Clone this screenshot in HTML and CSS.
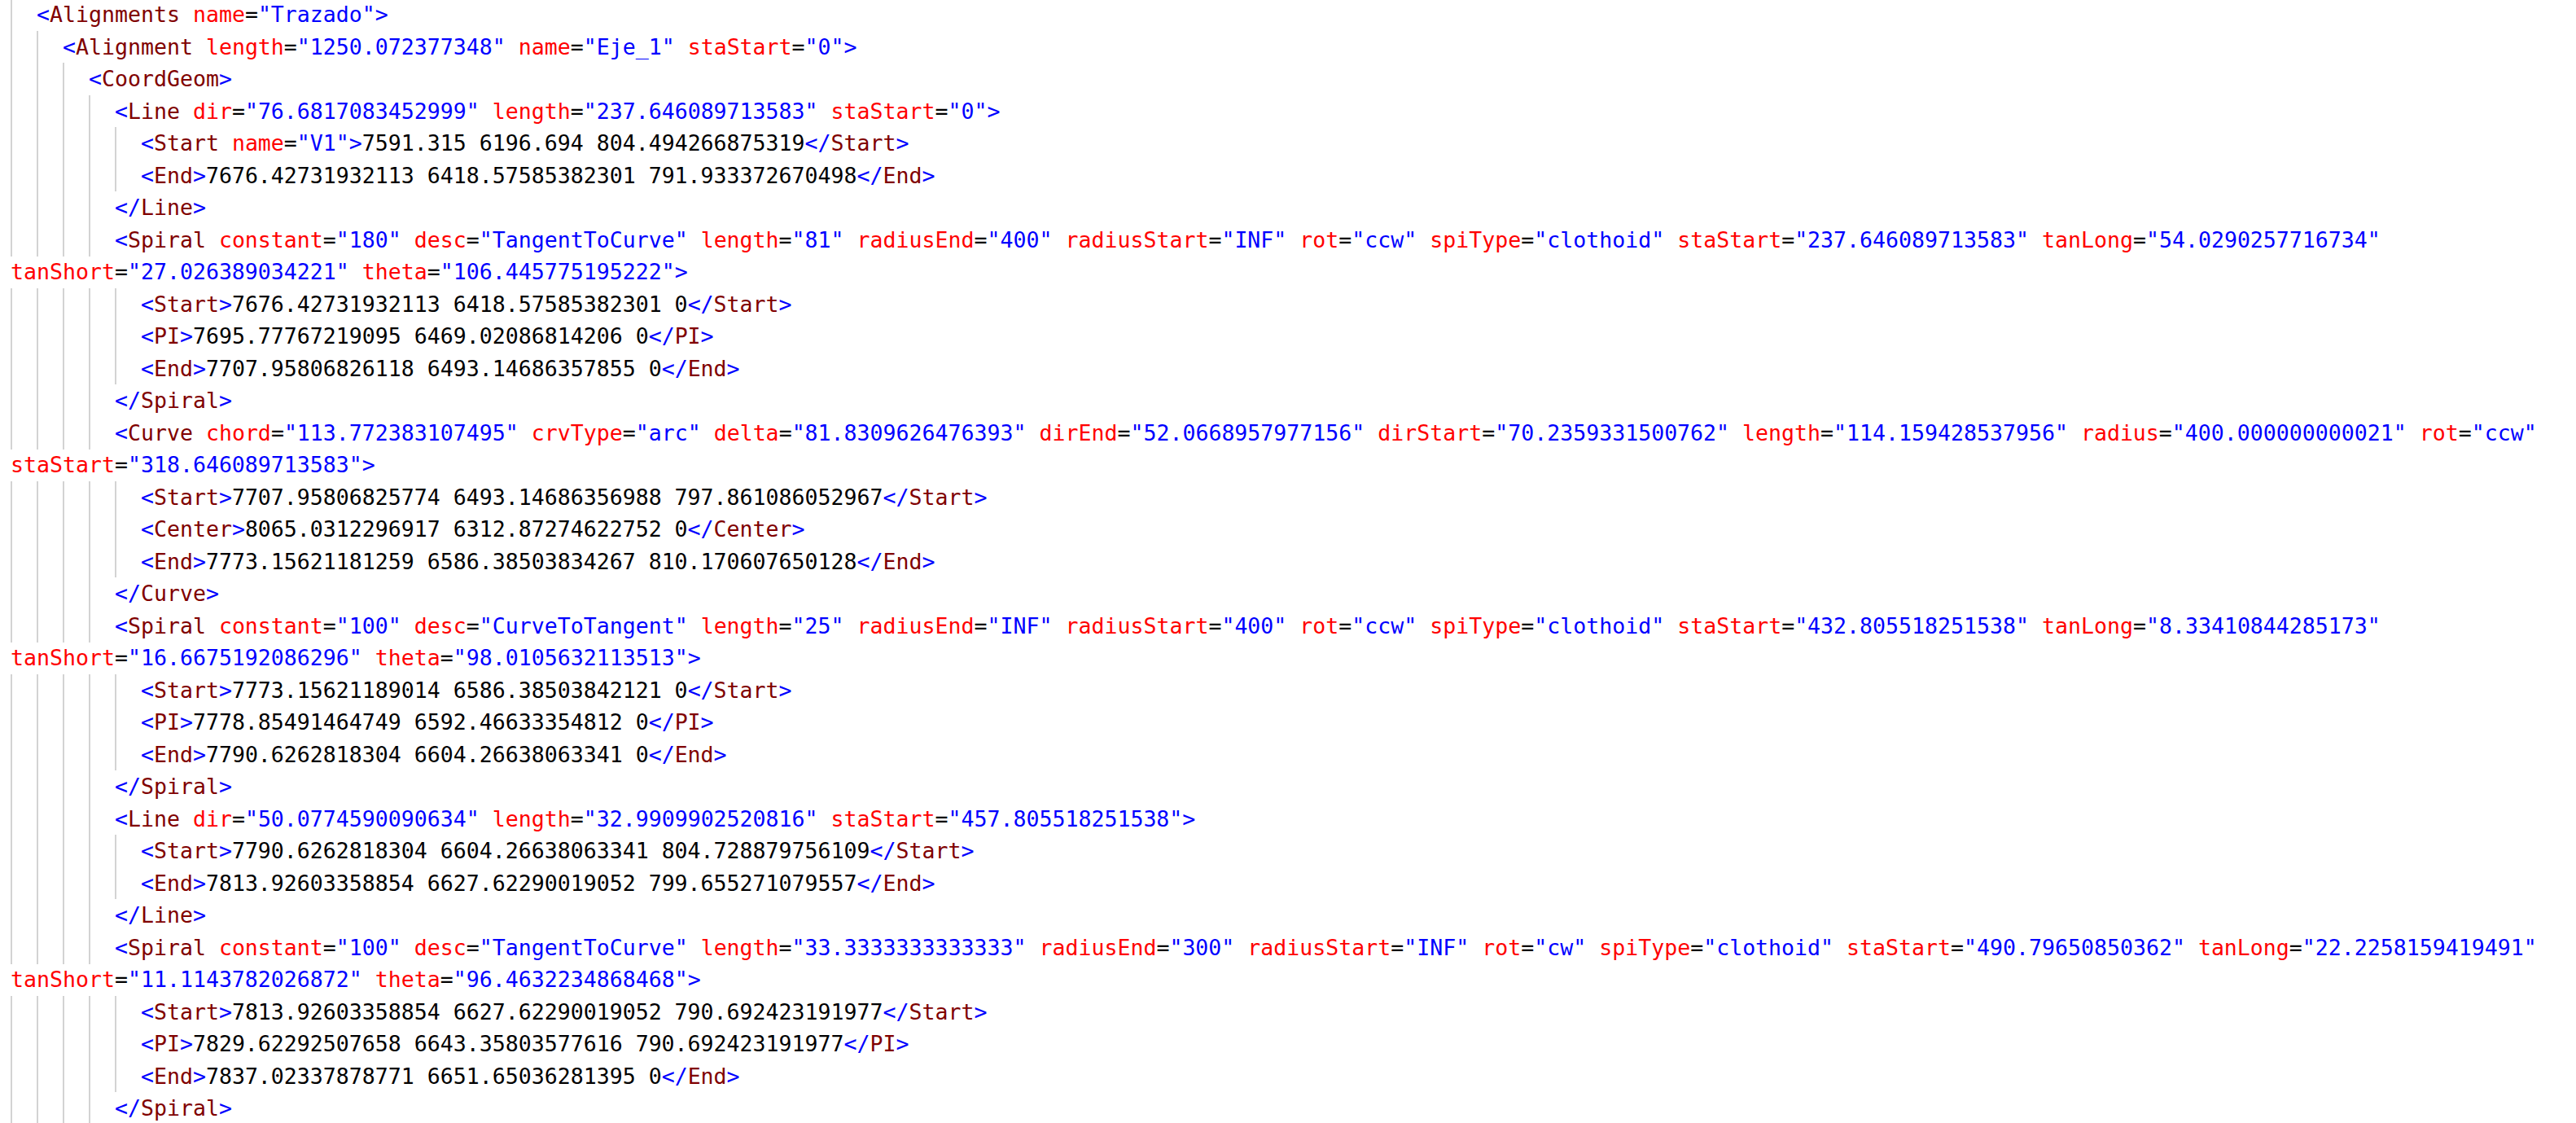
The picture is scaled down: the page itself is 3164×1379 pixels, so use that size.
FILE: index.html
```html
<!DOCTYPE html>
<html lang="en">
<head>
<meta charset="utf-8">
<title>LandXML</title>
<link rel="stylesheet" href="styles.css">
</head>
<body>
<div class="xml">
<div class="ln i2">  <span class="d">&lt;</span><span class="n">Alignments</span> <span class="a">name</span>=<span class="v">"Trazado"</span><span class="d">&gt;</span></div>
<div class="ln i4">    <span class="d">&lt;</span><span class="n">Alignment</span> <span class="a">length</span>=<span class="v">"1250.072377348"</span> <span class="a">name</span>=<span class="v">"Eje_1"</span> <span class="a">staStart</span>=<span class="v">"0"</span><span class="d">&gt;</span></div>
<div class="ln i6">      <span class="d">&lt;</span><span class="n">CoordGeom</span><span class="d">&gt;</span></div>
<div class="ln i8">        <span class="d">&lt;</span><span class="n">Line</span> <span class="a">dir</span>=<span class="v">"76.6817083452999"</span> <span class="a">length</span>=<span class="v">"237.646089713583"</span> <span class="a">staStart</span>=<span class="v">"0"</span><span class="d">&gt;</span></div>
<div class="ln i10">          <span class="d">&lt;</span><span class="n">Start</span> <span class="a">name</span>=<span class="v">"V1"</span><span class="d">&gt;</span>7591.315 6196.694 804.494266875319<span class="d">&lt;/</span><span class="n">Start</span><span class="d">&gt;</span></div>
<div class="ln i10">          <span class="d">&lt;</span><span class="n">End</span><span class="d">&gt;</span>7676.42731932113 6418.57585382301 791.933372670498<span class="d">&lt;/</span><span class="n">End</span><span class="d">&gt;</span></div>
<div class="ln i8">        <span class="d">&lt;/</span><span class="n">Line</span><span class="d">&gt;</span></div>
<div class="ln i8">        <span class="d">&lt;</span><span class="n">Spiral</span> <span class="a">constant</span>=<span class="v">"180"</span> <span class="a">desc</span>=<span class="v">"TangentToCurve"</span> <span class="a">length</span>=<span class="v">"81"</span> <span class="a">radiusEnd</span>=<span class="v">"400"</span> <span class="a">radiusStart</span>=<span class="v">"INF"</span> <span class="a">rot</span>=<span class="v">"ccw"</span> <span class="a">spiType</span>=<span class="v">"clothoid"</span> <span class="a">staStart</span>=<span class="v">"237.646089713583"</span> <span class="a">tanLong</span>=<span class="v">"54.0290257716734"</span> <span class="a">tanShort</span>=<span class="v">"27.026389034221"</span> <span class="a">theta</span>=<span class="v">"106.445775195222"</span><span class="d">&gt;</span></div>
<div class="ln i10">          <span class="d">&lt;</span><span class="n">Start</span><span class="d">&gt;</span>7676.42731932113 6418.57585382301 0<span class="d">&lt;/</span><span class="n">Start</span><span class="d">&gt;</span></div>
<div class="ln i10">          <span class="d">&lt;</span><span class="n">PI</span><span class="d">&gt;</span>7695.77767219095 6469.02086814206 0<span class="d">&lt;/</span><span class="n">PI</span><span class="d">&gt;</span></div>
<div class="ln i10">          <span class="d">&lt;</span><span class="n">End</span><span class="d">&gt;</span>7707.95806826118 6493.14686357855 0<span class="d">&lt;/</span><span class="n">End</span><span class="d">&gt;</span></div>
<div class="ln i8">        <span class="d">&lt;/</span><span class="n">Spiral</span><span class="d">&gt;</span></div>
<div class="ln i8">        <span class="d">&lt;</span><span class="n">Curve</span> <span class="a">chord</span>=<span class="v">"113.772383107495"</span> <span class="a">crvType</span>=<span class="v">"arc"</span> <span class="a">delta</span>=<span class="v">"81.8309626476393"</span> <span class="a">dirEnd</span>=<span class="v">"52.0668957977156"</span> <span class="a">dirStart</span>=<span class="v">"70.2359331500762"</span> <span class="a">length</span>=<span class="v">"114.159428537956"</span> <span class="a">radius</span>=<span class="v">"400.000000000021"</span> <span class="a">rot</span>=<span class="v">"ccw"</span> <span class="a">staStart</span>=<span class="v">"318.646089713583"</span><span class="d">&gt;</span></div>
<div class="ln i10">          <span class="d">&lt;</span><span class="n">Start</span><span class="d">&gt;</span>7707.95806825774 6493.14686356988 797.861086052967<span class="d">&lt;/</span><span class="n">Start</span><span class="d">&gt;</span></div>
<div class="ln i10">          <span class="d">&lt;</span><span class="n">Center</span><span class="d">&gt;</span>8065.0312296917 6312.87274622752 0<span class="d">&lt;/</span><span class="n">Center</span><span class="d">&gt;</span></div>
<div class="ln i10">          <span class="d">&lt;</span><span class="n">End</span><span class="d">&gt;</span>7773.15621181259 6586.38503834267 810.170607650128<span class="d">&lt;/</span><span class="n">End</span><span class="d">&gt;</span></div>
<div class="ln i8">        <span class="d">&lt;/</span><span class="n">Curve</span><span class="d">&gt;</span></div>
<div class="ln i8">        <span class="d">&lt;</span><span class="n">Spiral</span> <span class="a">constant</span>=<span class="v">"100"</span> <span class="a">desc</span>=<span class="v">"CurveToTangent"</span> <span class="a">length</span>=<span class="v">"25"</span> <span class="a">radiusEnd</span>=<span class="v">"INF"</span> <span class="a">radiusStart</span>=<span class="v">"400"</span> <span class="a">rot</span>=<span class="v">"ccw"</span> <span class="a">spiType</span>=<span class="v">"clothoid"</span> <span class="a">staStart</span>=<span class="v">"432.805518251538"</span> <span class="a">tanLong</span>=<span class="v">"8.33410844285173"</span> <span class="a">tanShort</span>=<span class="v">"16.6675192086296"</span> <span class="a">theta</span>=<span class="v">"98.0105632113513"</span><span class="d">&gt;</span></div>
<div class="ln i10">          <span class="d">&lt;</span><span class="n">Start</span><span class="d">&gt;</span>7773.15621189014 6586.38503842121 0<span class="d">&lt;/</span><span class="n">Start</span><span class="d">&gt;</span></div>
<div class="ln i10">          <span class="d">&lt;</span><span class="n">PI</span><span class="d">&gt;</span>7778.85491464749 6592.46633354812 0<span class="d">&lt;/</span><span class="n">PI</span><span class="d">&gt;</span></div>
<div class="ln i10">          <span class="d">&lt;</span><span class="n">End</span><span class="d">&gt;</span>7790.6262818304 6604.26638063341 0<span class="d">&lt;/</span><span class="n">End</span><span class="d">&gt;</span></div>
<div class="ln i8">        <span class="d">&lt;/</span><span class="n">Spiral</span><span class="d">&gt;</span></div>
<div class="ln i8">        <span class="d">&lt;</span><span class="n">Line</span> <span class="a">dir</span>=<span class="v">"50.0774590090634"</span> <span class="a">length</span>=<span class="v">"32.9909902520816"</span> <span class="a">staStart</span>=<span class="v">"457.805518251538"</span><span class="d">&gt;</span></div>
<div class="ln i10">          <span class="d">&lt;</span><span class="n">Start</span><span class="d">&gt;</span>7790.6262818304 6604.26638063341 804.728879756109<span class="d">&lt;/</span><span class="n">Start</span><span class="d">&gt;</span></div>
<div class="ln i10">          <span class="d">&lt;</span><span class="n">End</span><span class="d">&gt;</span>7813.92603358854 6627.62290019052 799.655271079557<span class="d">&lt;/</span><span class="n">End</span><span class="d">&gt;</span></div>
<div class="ln i8">        <span class="d">&lt;/</span><span class="n">Line</span><span class="d">&gt;</span></div>
<div class="ln i8">        <span class="d">&lt;</span><span class="n">Spiral</span> <span class="a">constant</span>=<span class="v">"100"</span> <span class="a">desc</span>=<span class="v">"TangentToCurve"</span> <span class="a">length</span>=<span class="v">"33.3333333333333"</span> <span class="a">radiusEnd</span>=<span class="v">"300"</span> <span class="a">radiusStart</span>=<span class="v">"INF"</span> <span class="a">rot</span>=<span class="v">"cw"</span> <span class="a">spiType</span>=<span class="v">"clothoid"</span> <span class="a">staStart</span>=<span class="v">"490.79650850362"</span> <span class="a">tanLong</span>=<span class="v">"22.2258159419491"</span> <span class="a">tanShort</span>=<span class="v">"11.1143782026872"</span> <span class="a">theta</span>=<span class="v">"96.4632234868468"</span><span class="d">&gt;</span></div>
<div class="ln i10">          <span class="d">&lt;</span><span class="n">Start</span><span class="d">&gt;</span>7813.92603358854 6627.62290019052 790.692423191977<span class="d">&lt;/</span><span class="n">Start</span><span class="d">&gt;</span></div>
<div class="ln i10">          <span class="d">&lt;</span><span class="n">PI</span><span class="d">&gt;</span>7829.62292507658 6643.35803577616 790.692423191977<span class="d">&lt;/</span><span class="n">PI</span><span class="d">&gt;</span></div>
<div class="ln i10">          <span class="d">&lt;</span><span class="n">End</span><span class="d">&gt;</span>7837.02337878771 6651.65036281395 0<span class="d">&lt;/</span><span class="n">End</span><span class="d">&gt;</span></div>
<div class="ln i8">        <span class="d">&lt;/</span><span class="n">Spiral</span><span class="d">&gt;</span></div>
</div>
</body>
</html>
```

FILE: styles.css
```css
html, body {
  margin: 0;
  padding: 0;
  background: #ffffff;
  overflow: hidden;
}

.xml {
  margin-top: -1.75px;
  padding: 0 20px 0 13px;
  font-family: "DejaVu Sans Mono", "Liberation Mono", monospace;
  font-size: 26.57px;
  line-height: 39.5px;
  color: #000000;
}

.ln {
  white-space: pre-wrap;
  background-image: repeating-linear-gradient(to right, #d3d3d3 0, #d3d3d3 2px, transparent 2px, transparent 32px);
  background-repeat: no-repeat;
  background-position: 0 0;
}

.i2 { background-size: 32px 40px; }
.i4 { background-size: 64px 40px; }
.i6 { background-size: 96px 40px; }
.i8 { background-size: 128px 40px; }
.i10 { background-size: 160px 40px; }

.d { color: #0000ff; }
.n { color: #800000; }
.a { color: #ff0000; }
.v { color: #0000ff; }
```
